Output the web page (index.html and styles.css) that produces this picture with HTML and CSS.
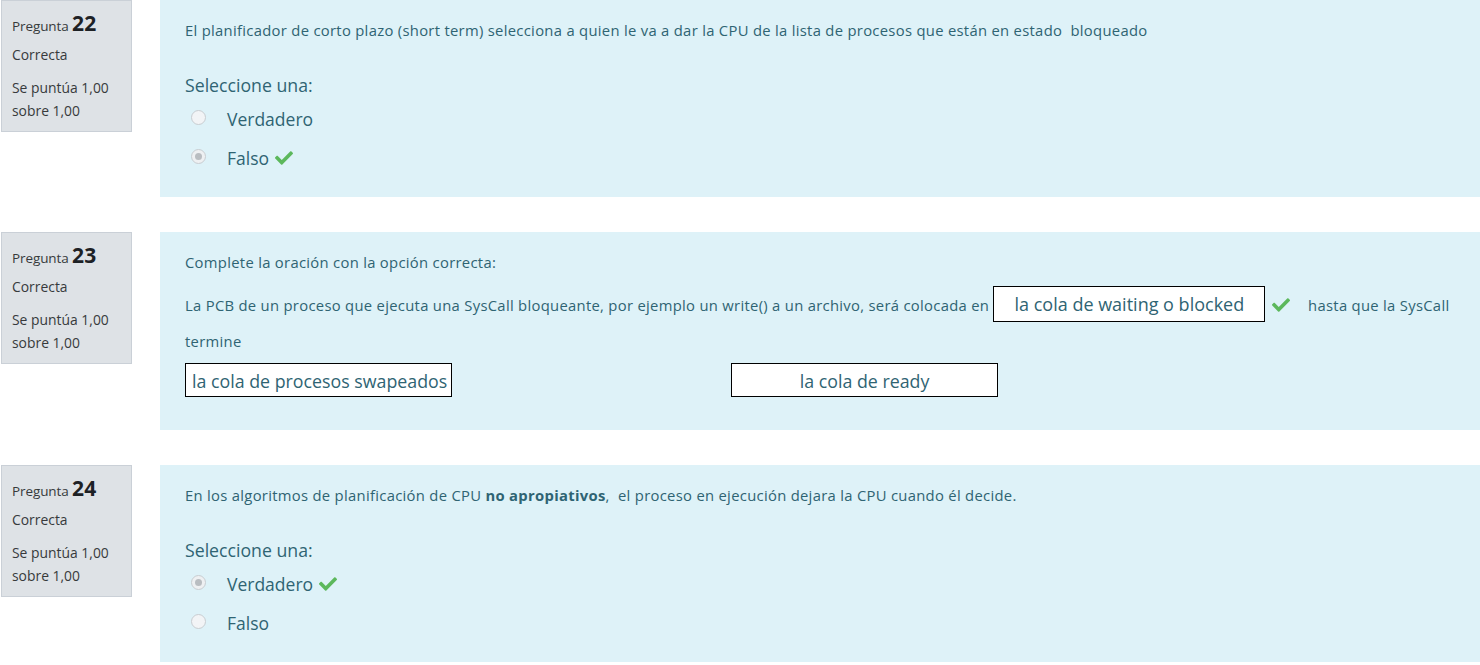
FILE: index.html
```html
<!DOCTYPE html>
<html lang="es">
<head>
<meta charset="utf-8">
<title>Preguntas</title>
<link rel="stylesheet" href="styles.css">
</head>
<body>
<div class="page">

  <div class="que">
    <div class="info">
      <h3 class="no">Pregunta <span class="qno">22</span></h3>
      <div class="state">Correcta</div>
      <div class="grade">Se puntúa 1,00 sobre 1,00</div>
    </div>
    <div class="formulation">
      <p class="qtext">El planificador de corto plazo (short term) selecciona a quien le va a dar la CPU de la lista de procesos que están en estado&nbsp; bloqueado</p>
      <div class="prompt">Seleccione una:</div>
      <div class="answer">
        <div class="opt"><span class="radio"></span><span class="label">Verdadero</span></div>
        <div class="opt"><span class="radio checked"></span><span class="label">Falso <svg class="check" viewBox="0 0 512 512"><path d="M173.898 439.404l-166.4-166.4c-9.997-9.997-9.997-26.206 0-36.204l36.203-36.204c9.997-9.998 26.207-9.998 36.204 0L192 312.69 432.095 72.596c9.997-9.997 26.207-9.997 36.204 0l36.203 36.204c9.997 9.997 9.997 26.206 0 36.204l-294.4 294.401c-9.998 9.997-26.207 9.997-36.204-.001z"/></svg></span></div>
      </div>
    </div>
  </div>

  <div class="que">
    <div class="info">
      <h3 class="no">Pregunta <span class="qno">23</span></h3>
      <div class="state">Correcta</div>
      <div class="grade">Se puntúa 1,00 sobre 1,00</div>
    </div>
    <div class="formulation ddwtos">
      <p class="qtext">Complete la oración con la opción correcta:</p>
      <p class="qtext sentence"><span class="seg">La PCB de un proceso que ejecuta una SysCall bloqueante, por ejemplo un write() a un archivo, será colocada en</span> <span class="drop">la cola de waiting o blocked</span> <svg class="check inline" viewBox="0 0 512 512"><path d="M173.898 439.404l-166.4-166.4c-9.997-9.997-9.997-26.206 0-36.204l36.203-36.204c9.997-9.998 26.207-9.998 36.204 0L192 312.69 432.095 72.596c9.997-9.997 26.207-9.997 36.204 0l36.203 36.204c9.997 9.997 9.997 26.206 0 36.204l-294.4 294.401c-9.998 9.997-26.207 9.997-36.204-.001z"/></svg>&nbsp;&nbsp;&nbsp; <span class="seg">hasta que la SysCall</span> <span class="seg">termine</span></p>
      <div class="drags">
        <span class="drag left">la cola de procesos swapeados</span>
        <span class="drag placeholder">la cola de waiting o blocked</span>
        <span class="drag">la cola de ready</span>
      </div>
    </div>
  </div>

  <div class="que">
    <div class="info">
      <h3 class="no">Pregunta <span class="qno">24</span></h3>
      <div class="state">Correcta</div>
      <div class="grade">Se puntúa 1,00 sobre 1,00</div>
    </div>
    <div class="formulation">
      <p class="qtext">En los algoritmos de planificación de CPU <strong>no apropiativos</strong>,&nbsp; el proceso en ejecución dejara la CPU cuando él decide.</p>
      <div class="prompt">Seleccione una:</div>
      <div class="answer">
        <div class="opt"><span class="radio checked"></span><span class="label">Verdadero <svg class="check" viewBox="0 0 512 512"><path d="M173.898 439.404l-166.4-166.4c-9.997-9.997-9.997-26.206 0-36.204l36.203-36.204c9.997-9.998 26.207-9.998 36.204 0L192 312.69 432.095 72.596c9.997-9.997 26.207-9.997 36.204 0l36.203 36.204c9.997 9.997 9.997 26.206 0 36.204l-294.4 294.401c-9.998 9.997-26.207 9.997-36.204-.001z"/></svg></span></div>
        <div class="opt"><span class="radio"></span><span class="label">Falso</span></div>
      </div>
    </div>
  </div>

</div>
</body>
</html>
```
FILE: styles.css
```css
html, body {
  margin: 0;
  padding: 0;
  background: #ffffff;
}
body {
  font-family: "Open Sans", "Noto Sans", "Liberation Sans", sans-serif;
  color: #373a3c;
  overflow: hidden;
}
.page {
  padding-left: 1px;
}
.que {
  display: flex;
  align-items: flex-start;
  gap: 28px;
  margin-bottom: 35px;
}
.info {
  flex: 0 0 131px;
  box-sizing: border-box;
  width: 131px;
  background: #dee2e6;
  border: 1px solid #cad0d7;
  padding: 7px 8px 9px 10px;
  font-size: 13.9px;
  color: #373a3c;
}
.no {
  margin: 0;
  font-weight: 400;
  font-size: 13.5px;
  line-height: 30px;
  height: 30px;
  letter-spacing: -0.1px;
  white-space: nowrap;
}
.qno {
  font-size: 21px;
  font-weight: 700;
  color: #1d2125;
  letter-spacing: 0.3px;
}
.state {
  margin-top: 6px;
  line-height: 22px;
}
.grade {
  margin-top: 10px;
  line-height: 23px;
}
.formulation {
  flex: 1;
  background: #def2f8;
  color: #2f6473;
  padding: 20px 25px 19px 25px;
  min-height: 158px;
}
.qtext {
  margin: 0;
  font-size: 14.8px;
  letter-spacing: 0.3px;
  line-height: 21px;
}
.qtext strong {
  font-weight: 700;
}
.prompt {
  margin-top: 31px;
  font-size: 17.7px;
  line-height: 26px;
}
.answer {
  margin-top: 2px;
}
.opt {
  display: flex;
  align-items: center;
  height: 39px;
}
.radio {
  box-sizing: border-box;
  width: 15px;
  height: 15px;
  border-radius: 50%;
  border: 1px solid #c8cdd1;
  background: #f2f4f6;
  margin-left: 6px;
  margin-right: 21px;
  margin-top: -4px;
  position: relative;
  flex: 0 0 auto;
}
.radio.checked {
  background: #eef0f2;
}
.radio.checked::after {
  content: "";
  position: absolute;
  left: 3px;
  top: 3px;
  width: 7px;
  height: 7px;
  border-radius: 50%;
  background: #b9bdc1;
}
.label {
  font-size: 17.5px;
  line-height: 26px;
  padding-bottom: 2px;
  display: inline-flex;
  align-items: center;
  gap: 6px;
}
.check {
  width: 18px;
  height: 18px;
  fill: #5cb85c;
}
.check.inline {
  vertical-align: middle;
  margin: 0 2px 0 2px;
  position: relative;
  top: -2px;
}
.ddwtos {
  padding-bottom: 33px;
  min-height: 0;
}
.sentence {
  margin-top: 14px;
  line-height: 36px;
}
.drop {
  display: inline-block;
  box-sizing: border-box;
  width: 272px;
  height: 36px;
  line-height: 35px;
  border: 1px solid #000;
  background: #fff;
  text-align: center;
  font-size: 18px;
  letter-spacing: 0;
  color: #2f6473;
  vertical-align: top;
  position: relative;
  top: -1px;
}
.drags {
  margin-top: 4px;
  display: flex;
  gap: 6px;
}
.drag {
  box-sizing: border-box;
  width: 267px;
  height: 34px;
  line-height: 34px;
  border: 1px solid #000;
  background: #fff;
  text-align: center;
  font-size: 17.8px;
  color: #2f6473;
  white-space: nowrap;
}
.drag.left {
  text-align: left;
  padding-left: 6px;
}
.drag.placeholder {
  visibility: hidden;
}
```
